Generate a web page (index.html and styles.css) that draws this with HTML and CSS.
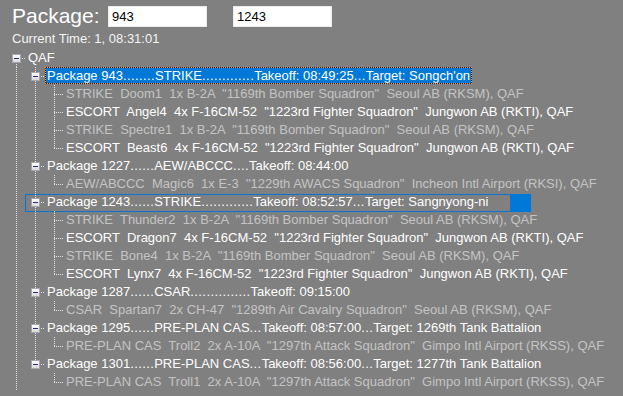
FILE: index.html
```html
<!DOCTYPE html>
<html>
<head>
<meta charset="utf-8">
<link rel="stylesheet" href="styles.css">
</head>
<body>
<div class="header">
  <span class="title">Package:</span>
  <input class="pkg first" value="943">
  <input class="pkg second" value="1243">
</div>
<div class="time">Current Time: 1, 08:31:01</div>
<div class="tree">
  <div class="row">
    <span class="n b"><span class="box"></span></span>
    <span class="lbl">QAF</span>
  </div>

  <div class="row">
    <span class="g v"></span>
    <span class="n t b"><span class="box"></span></span>
    <span class="lbl sel">Package 943<span class="dots">........</span>STRIKE<span class="dots">.............</span>Takeoff: 08:49:25<span class="dots">...</span>Target: Songch'on</span>
  </div>
  <div class="row">
    <span class="g v"></span><span class="g v"></span>
    <span class="n t b h"></span>
    <span class="lbl dim">STRIKE  Doom1  1x B-2A  "1169th Bomber Squadron"  Seoul AB (RKSM), QAF</span>
  </div>
  <div class="row">
    <span class="g v"></span><span class="g v"></span>
    <span class="n t b h"></span>
    <span class="lbl">ESCORT  Angel4  4x F-16CM-52  "1223rd Fighter Squadron"  Jungwon AB (RKTI), QAF</span>
  </div>
  <div class="row">
    <span class="g v"></span><span class="g v"></span>
    <span class="n t b h"></span>
    <span class="lbl dim">STRIKE  Spectre1  1x B-2A  "1169th Bomber Squadron"  Seoul AB (RKSM), QAF</span>
  </div>
  <div class="row">
    <span class="g v"></span><span class="g v"></span>
    <span class="n t h"></span>
    <span class="lbl">ESCORT  Beast6  4x F-16CM-52  "1223rd Fighter Squadron"  Jungwon AB (RKTI), QAF</span>
  </div>

  <div class="row">
    <span class="g v"></span>
    <span class="n t b"><span class="box"></span></span>
    <span class="lbl">Package 1227<span class="dots">......</span>AEW/ABCCC<span class="dots">....</span>Takeoff: 08:44:00</span>
  </div>
  <div class="row">
    <span class="g v"></span><span class="g v"></span>
    <span class="n t h"></span>
    <span class="lbl dim">AEW/ABCCC  Magic6  1x E-3  "1229th AWACS Squadron"  Incheon Intl Airport (RKSI), QAF</span>
  </div>

  <div class="row marked">
    <span class="g v"></span>
    <span class="n t b"><span class="box"></span></span>
    <span class="lbl">Package 1243<span class="dots">......</span>STRIKE<span class="dots">.............</span>Takeoff: 08:52:57<span class="dots">...</span>Target: Sangnyong-ni</span>
  </div>
  <div class="row">
    <span class="g v"></span><span class="g v"></span>
    <span class="n t b h"></span>
    <span class="lbl dim">STRIKE  Thunder2  1x B-2A  "1169th Bomber Squadron"  Seoul AB (RKSM), QAF</span>
  </div>
  <div class="row">
    <span class="g v"></span><span class="g v"></span>
    <span class="n t b h"></span>
    <span class="lbl">ESCORT  Dragon7  4x F-16CM-52  "1223rd Fighter Squadron"  Jungwon AB (RKTI), QAF</span>
  </div>
  <div class="row">
    <span class="g v"></span><span class="g v"></span>
    <span class="n t b h"></span>
    <span class="lbl dim">STRIKE  Bone4  1x B-2A  "1169th Bomber Squadron"  Seoul AB (RKSM), QAF</span>
  </div>
  <div class="row">
    <span class="g v"></span><span class="g v"></span>
    <span class="n t h"></span>
    <span class="lbl">ESCORT  Lynx7  4x F-16CM-52  "1223rd Fighter Squadron"  Jungwon AB (RKTI), QAF</span>
  </div>

  <div class="row">
    <span class="g v"></span>
    <span class="n t b"><span class="box"></span></span>
    <span class="lbl">Package 1287<span class="dots">......</span>CSAR<span class="dots">...............</span>Takeoff: 09:15:00</span>
  </div>
  <div class="row">
    <span class="g v"></span><span class="g v"></span>
    <span class="n t h"></span>
    <span class="lbl dim">CSAR  Spartan7  2x CH-47  "1289th Air Cavalry Squadron"  Seoul AB (RKSM), QAF</span>
  </div>

  <div class="row">
    <span class="g v"></span>
    <span class="n t b"><span class="box"></span></span>
    <span class="lbl">Package 1295<span class="dots">......</span>PRE-PLAN CAS<span class="dots">...</span>Takeoff: 08:57:00<span class="dots">...</span>Target: 1269th Tank Battalion</span>
  </div>
  <div class="row">
    <span class="g v"></span><span class="g v"></span>
    <span class="n t h"></span>
    <span class="lbl dim">PRE-PLAN CAS  Troll2  2x A-10A  "1297th Attack Squadron"  Gimpo Intl Airport (RKSS), QAF</span>
  </div>

  <div class="row">
    <span class="g v"></span>
    <span class="n t"><span class="box"></span></span>
    <span class="lbl">Package 1301<span class="dots">......</span>PRE-PLAN CAS<span class="dots">...</span>Takeoff: 08:56:00<span class="dots">...</span>Target: 1277th Tank Battalion</span>
  </div>
  <div class="row">
    <span class="g v"></span><span class="g"></span>
    <span class="n t h"></span>
    <span class="lbl dim">PRE-PLAN CAS  Troll1  2x A-10A  "1297th Attack Squadron"  Gimpo Intl Airport (RKSS), QAF</span>
  </div>
</div>
</body>
</html>
```

FILE: styles.css
```css
html, body {
  margin: 0;
  padding: 0;
}
body {
  background: #808080;
  color: #ffffff;
  font-family: "Liberation Sans", Arial, sans-serif;
  font-size: 13px;
  overflow: hidden;
  width: 623px;
  height: 396px;
}
.header {
  display: flex;
  align-items: flex-start;
  padding: 6px 0 0 12px;
  height: 21px;
}
.title {
  font-size: 21px;
  line-height: 21px;
  margin-top: -1px;
  width: 96px;
  color: #ffffff;
}
.pkg {
  box-sizing: border-box;
  width: 99px;
  height: 21px;
  margin: 0;
  padding: 0 3px;
  border: 1px solid #ececec;
  background: #ffffff;
  color: #000000;
  font-family: "Liberation Sans", Arial, sans-serif;
  font-size: 13px;
  outline: none;
}
.pkg.second {
  margin-left: 26px;
}
.time {
  margin-top: 4px;
  padding-left: 12px;
  line-height: 16px;
  color: #f4f4f4;
}
.tree {
  margin-top: 2px;
  padding-left: 7px;
}
.row {
  position: relative;
  display: flex;
  height: 18px;
  line-height: 18px;
  white-space: pre;
}
.g, .n {
  position: relative;
  flex: 0 0 19px;
  width: 19px;
  height: 18px;
}
.g.v::before {
  content: "";
  position: absolute;
  left: 9px;
  top: 0;
  bottom: 0;
  width: 1px;
  background: repeating-linear-gradient(to bottom, #e4e4e4 0 1px, transparent 1px 2px);
}
.n::before {
  content: "";
  position: absolute;
  left: 9px;
  width: 1px;
  top: 9px;
  bottom: 9px;
  background: repeating-linear-gradient(to bottom, #e4e4e4 0 1px, transparent 1px 2px);
}
.n.t::before {
  top: 0;
}
.n.b::before {
  bottom: 0;
}
.n::after {
  content: "";
  position: absolute;
  left: 9px;
  right: 0;
  top: 9px;
  height: 1px;
  background: repeating-linear-gradient(to right, #e4e4e4 0 1px, transparent 1px 2px);
}
.box {
  position: absolute;
  z-index: 1;
  left: 5px;
  top: 5px;
  width: 9px;
  height: 9px;
  box-sizing: border-box;
  border: 1px solid #a4a7b0;
  background: linear-gradient(#ffffff, #d9d9dc);
}
.box::after {
  content: "";
  position: absolute;
  left: 1px;
  top: 3px;
  width: 5px;
  height: 1px;
  background: #1f2f6b;
}
.lbl {
  padding: 0 2px;
  color: #ffffff;
}
.lbl.dim {
  color: #c4c4c4;
}
.dots {
  letter-spacing: 0.4px;
}
.lbl.sel {
  height: 17px;
  line-height: 15px;
  box-sizing: border-box;
  padding: 0 1px;
  border: 1px dotted #ff9a3c;
  background: linear-gradient(#0078d7, #0078d7) padding-box, #1a1a1a;
  color: #ffffff;
}
.row.marked::after {
  content: "";
  position: absolute;
  left: 18px;
  top: 1px;
  width: 486px;
  height: 18px;
  box-sizing: border-box;
  border: 1px solid #0a74d4;
}
.row.marked::before {
  content: "";
  position: absolute;
  left: 504px;
  top: 1px;
  width: 20px;
  height: 18px;
  background: #0078d7;
}
```
